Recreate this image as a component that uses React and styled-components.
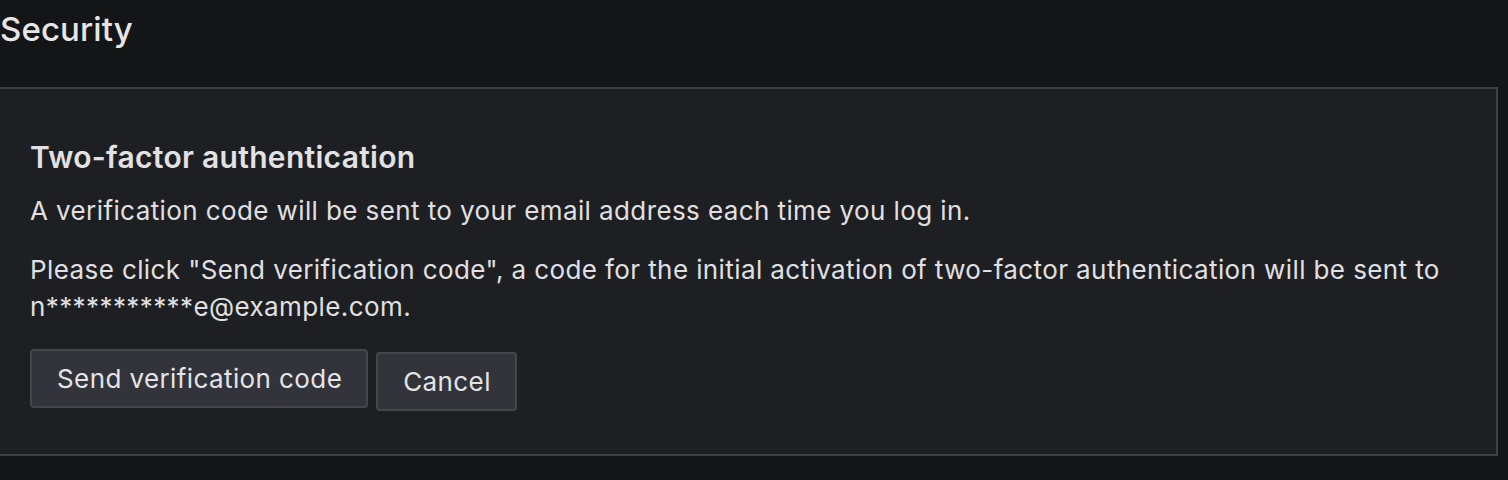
import React from 'react';
import styled, { createGlobalStyle } from 'styled-components';

const GlobalStyle = createGlobalStyle`
  html, body {
    margin: 0;
    padding: 0;
    background: #141517;
  }
  body {
    font-family: Inter, "Noto Sans", "Liberation Sans", sans-serif;
    color: #e4e4e6;
    -webkit-font-smoothing: antialiased;
  }
`;

const Page = styled.div`
  width: 1508px;
  height: 480px;
  overflow: hidden;
`;

const PageTitle = styled.h2`
  margin: 0;
  padding: 9px 0 0 0;
  height: 87px;
  box-sizing: border-box;
  font-size: 33px;
  font-weight: 500;
  line-height: 40px;
  letter-spacing: 0.1px;
  color: #e6e6e8;
`;

const Panel = styled.section`
  width: 1500px;
  margin-left: -2px;
  box-sizing: border-box;
  border: 2px solid #3e3f44;
  background: #1e1f23;
  padding: 48px 32px 43px 30px;
`;

const SectionTitle = styled.h3`
  margin: 0 0 15px 0;
  font-size: 30px;
  font-weight: 600;
  line-height: 40px;
  letter-spacing: 0.3px;
  color: #e2e2e4;
`;

const Text = styled.p`
  margin: 0 0 ${p => p.$gap || 22}px 0;
  font-size: 26px;
  line-height: 37px;
  letter-spacing: 0.4px;
  color: #e0e0e2;
`;

const Actions = styled.div`
  display: flex;
  align-items: flex-start;
  gap: 8px;
`;

const Button = styled.button`
  font-family: inherit;
  font-size: 26px;
  line-height: 30px;
  letter-spacing: 0.4px;
  color: #e4e4e6;
  background: #32333b;
  border: 2px solid #45464c;
  border-radius: 4px;
  padding: 13px 24px 12px 25px;
  margin-top: ${p => p.$offset || 0}px;
  cursor: pointer;
`;

export default function App() {
  return (
    <Page>
      <GlobalStyle />
      <PageTitle>Security</PageTitle>
      <Panel>
        <SectionTitle>Two-factor authentication</SectionTitle>
        <Text>A verification code will be sent to your email address each time you log in.</Text>
        <Text $gap={24}>
          Please click "Send verification code", a code for the initial activation of two-factor authentication will be sent to n***********e@example.com.
        </Text>
        <Actions>
          <Button>Send verification code</Button>
          <Button $offset={3}>Cancel</Button>
        </Actions>
      </Panel>
    </Page>
  );
}
